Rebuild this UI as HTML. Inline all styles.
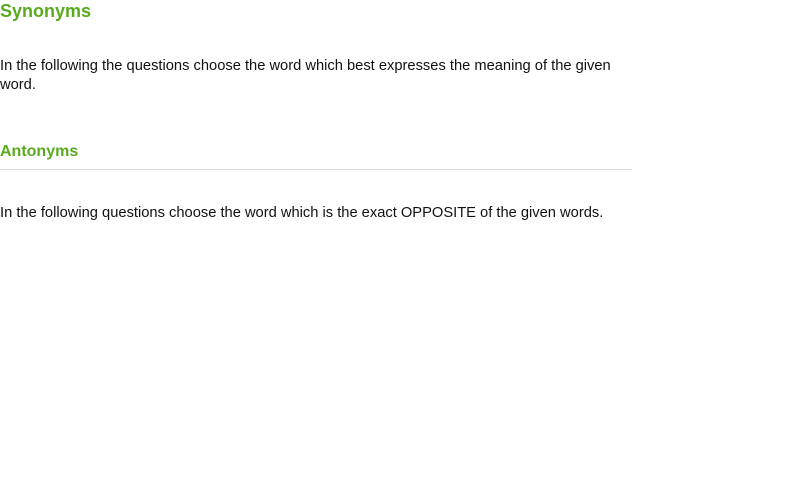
<!DOCTYPE html>
<html><head><style>
body{margin:0;background:#fff;font-family:"Liberation Sans",Arial,sans-serif;color:#111;}
.h{position:absolute;left:0;font-weight:bold;color:#5aaa1e;margin:0;}
.p{position:absolute;left:0;font-size:14.7px;line-height:19px;width:615px;margin:0;}
.hr{position:absolute;left:0;top:169px;width:632px;height:1px;background:#ddd;}
</style></head><body>
<div class="h" style="top:1px;font-size:18px">Synonyms</div>
<div class="p" style="top:57px">In the following the questions choose the word which best expresses the meaning of the given word.</div>
<div class="h" style="top:143px;font-size:16px">Antonyms</div>
<div class="hr"></div>
<div class="p" style="top:204px">In the following questions choose the word which is the exact OPPOSITE of the given words.</div>
</body></html>
